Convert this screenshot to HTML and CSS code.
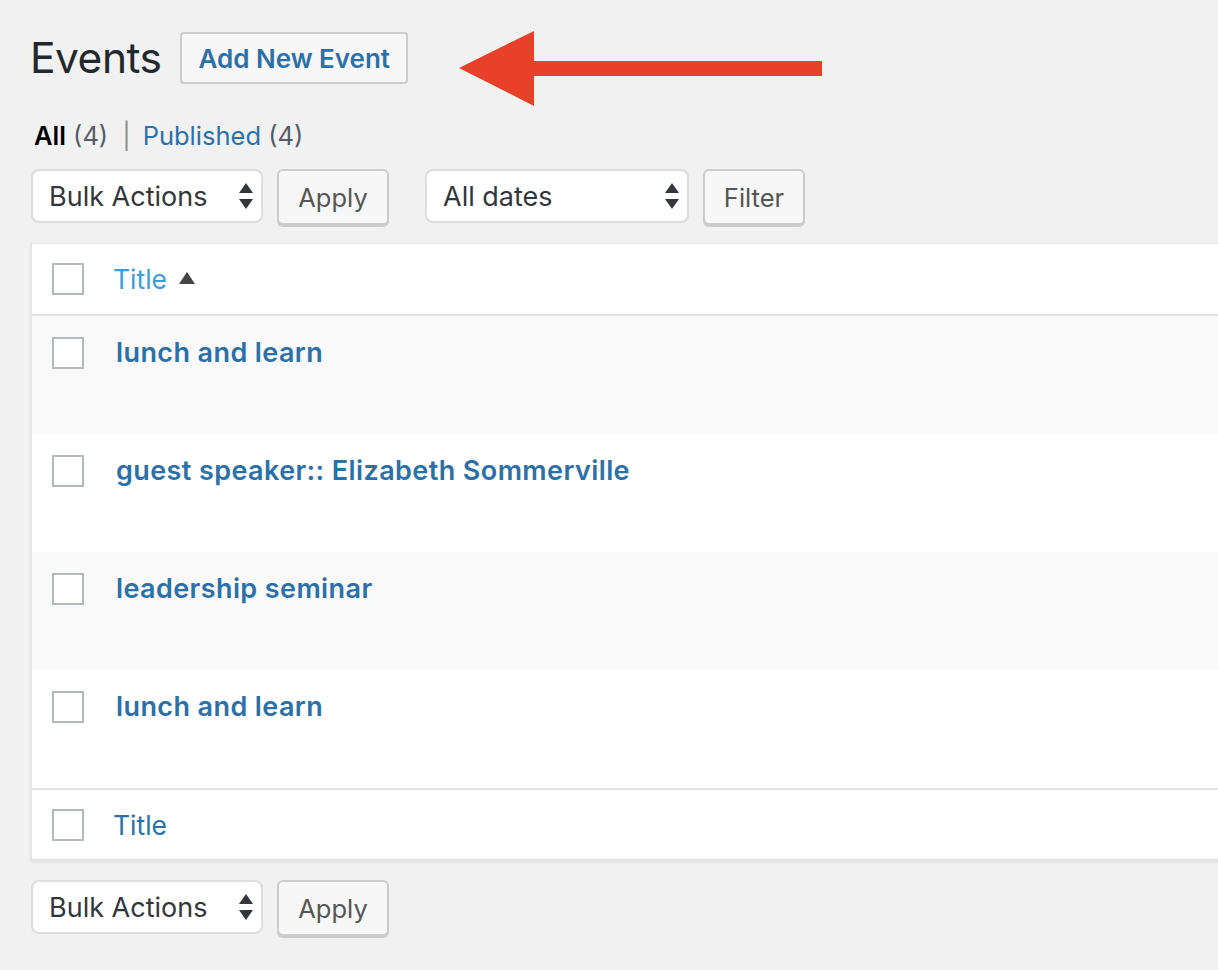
FILE: index.html
```html
<!DOCTYPE html>
<html>
<head>
<meta charset="utf-8">
<link rel="stylesheet" href="styles.css">
</head>
<body>
<div class="wrap">
  <div class="heading">
    <h1 class="title">Events</h1>
    <a class="add-new">Add New Event</a>
    <svg class="annot-arrow" width="366" height="76" viewBox="0 0 366 76">
      <polygon points="0,37 75,0 75,30 363,30 363,45 75,45 75,75" fill="#e9402a"/>
    </svg>
  </div>

  <ul class="subsubsub">
    <li class="current"><b>All</b> <span class="count">(4)</span></li>
    <li class="sep">|</li>
    <li><a>Published</a> <span class="count">(4)</span></li>
  </ul>

  <div class="tablenav">
    <div class="select w-bulk"><span>Bulk Actions</span>
      <svg class="updown" width="14" height="28" viewBox="0 0 14 28"><polygon points="7,0 14,10 0,10" fill="#32373c"/><polygon points="0,16 14,16 7,26" fill="#32373c"/></svg>
    </div>
    <button class="btn w-apply">Apply</button>
    <div class="select w-dates"><span>All dates</span>
      <svg class="updown" width="14" height="28" viewBox="0 0 14 28"><polygon points="7,0 14,10 0,10" fill="#32373c"/><polygon points="0,16 14,16 7,26" fill="#32373c"/></svg>
    </div>
    <button class="btn w-filter">Filter</button>
  </div>

  <div class="table">
    <div class="row head">
      <span class="cb"></span>
      <span class="col-title sorted">Title <svg class="sort" width="16" height="12" viewBox="0 0 16 12"><polygon points="8,0 16,12 0,12" fill="#444"/></svg></span>
    </div>
    <div class="row item alt"><span class="cb"></span><a class="row-title">lunch and learn</a></div>
    <div class="row item"><span class="cb"></span><a class="row-title">guest speaker:: Elizabeth Sommerville</a></div>
    <div class="row item alt"><span class="cb"></span><a class="row-title">leadership seminar</a></div>
    <div class="row item"><span class="cb"></span><a class="row-title">lunch and learn</a></div>
    <div class="row foot">
      <span class="cb"></span>
      <span class="col-title">Title</span>
    </div>
  </div>

  <div class="tablenav bottom">
    <div class="select w-bulk"><span>Bulk Actions</span>
      <svg class="updown" width="14" height="28" viewBox="0 0 14 28"><polygon points="7,0 14,10 0,10" fill="#32373c"/><polygon points="0,16 14,16 7,26" fill="#32373c"/></svg>
    </div>
    <button class="btn w-apply">Apply</button>
  </div>
</div>
</body>
</html>
```

FILE: styles.css
```css
* { box-sizing: border-box; }
html, body { margin: 0; padding: 0; }
body {
  background: #f1f1f1;
  font-family: Inter, "Noto Sans", "Liberation Sans", sans-serif;
  color: #32373c;
  overflow: hidden;
  width: 1218px;
  height: 970px;
}
.wrap {
  padding: 32px 0 0 30px;
  margin-right: -40px;
}
.heading {
  position: relative;
  display: flex;
  align-items: center;
  height: 52px;
}
.title {
  margin: 0;
  font-size: 42.5px;
  font-weight: 400;
  color: #23282d;
  letter-spacing: -0.5px;
  line-height: 52px;
}
.add-new {
  margin-left: 19px;
  height: 52px;
  padding: 0 16px;
  display: flex;
  align-items: center;
  border: 2px solid #ccc;
  border-radius: 4px;
  background: #f7f7f7;
  color: #2c70a8;
  font-weight: 600;
  font-size: 26px;
}
.annot-arrow {
  position: absolute;
  left: 429px;
  top: -1px;
}
.subsubsub {
  list-style: none;
  margin: 0;
  padding: 37px 0 0 4px;
  height: 85px;
  display: flex;
  align-items: flex-start;
  font-size: 25.5px;
  line-height: 30px;
  gap: 8px;
}
.subsubsub li { white-space: pre; }
.subsubsub b { color: #000; font-weight: 600; }
.subsubsub .count { color: #555d66; }
.subsubsub .sep { color: #8a8f94; margin: 0 4px 0 6px; }
.subsubsub a { color: #2c70a8; }

.tablenav {
  display: flex;
  align-items: flex-start;
  height: 74px;
}
.select {
  height: 54px;
  border: 2px solid #ddd;
  border-radius: 8px;
  background: #fff;
  display: flex;
  align-items: center;
  justify-content: space-between;
  padding: 0 8px 0 16px;
  font-size: 27px;
  color: #32373c;
  margin-left: 1px;
}
.updown { margin-top: 1px; }
.w-bulk { width: 232px; }
.w-dates { width: 264px; margin-left: 36px; }
.btn {
  height: 56px;
  border: 2px solid #ccc;
  border-radius: 6px;
  background: #f7f7f7;
  box-shadow: 0 2px 0 #ccc;
  font-family: inherit;
  font-size: 25.5px;
  color: #555;
  padding: 0;
  margin-left: 14px;
}
.w-apply { width: 112px; }
.w-filter { width: 102px; }

.table {
  background: #fff;
  border: 2px solid #e5e5e5;
  border-top-width: 1px;
  box-shadow: 0 2px 2px rgba(0,0,0,.05);
  border-right: none;
}
.row {
  display: flex;
  padding-left: 20px;
}
.cb {
  width: 32px;
  height: 32px;
  border: 2px solid #b4b9be;
  background: #fff;
  flex: none;
}
.head {
  height: 72px;
  align-items: center;
  border-bottom: 2px solid #e1e1e1;
}
.foot {
  height: 71px;
  align-items: center;
  border-top: 2px solid #e1e1e1;
}
.col-title {
  margin-left: 29px;
  font-size: 26.5px;
  color: #2c70a8;
  display: flex;
  align-items: center;
}
.col-title.sorted { color: #3d9cd6; }
.sort { margin-left: 12px; margin-top: -2px; }
.item {
  height: 118px;
  padding-top: 21px;
  align-items: flex-start;
}
.item.alt { background: #f9f9f9; }
.row-title {
  margin-left: 32px;
  font-size: 27px;
  font-weight: 600;
  letter-spacing: 0.4px;
  color: #2c70a8;
  line-height: 30px;
  margin-top: 1px;
}
.tablenav.bottom { margin-top: 19px; }
```
